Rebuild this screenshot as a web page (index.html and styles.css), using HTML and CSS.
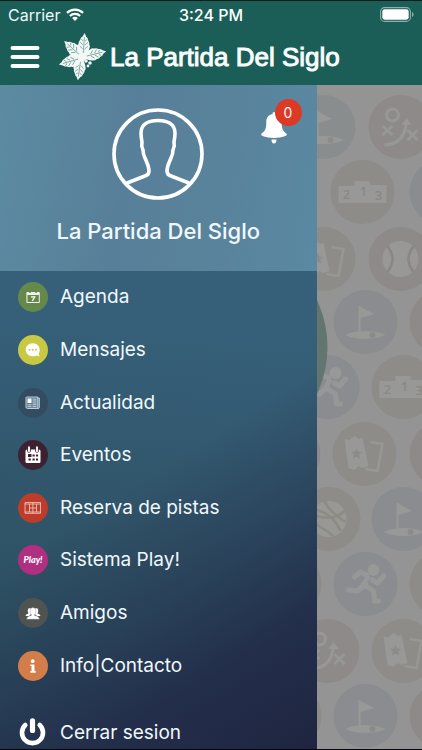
FILE: index.html
```html
<!DOCTYPE html>
<html lang="es">
<head>
<meta charset="utf-8">
<meta name="viewport" content="width=device-width, initial-scale=1">
<title>La Partida Del Siglo</title>
<link rel="stylesheet" href="styles.css">
</head>
<body>
<header class="topbar">
  <div class="status">
    <div class="carrier">
      <span>Carrier</span>
      <svg class="wifi" viewBox="0 0 18 13" aria-hidden="true"><g fill="none" stroke="#fff" stroke-width="2.3"><path d="M1 4.8a11.6 11.6 0 0 1 16 0"/><path d="M3.9 8a7.3 7.3 0 0 1 10.2 0"/></g><path d="M9 13 6.100 10.100a4.200 4.200 0 0 1 5.800 0z" fill="#fff"/></svg>
    </div>
    <time class="clock">3:24 PM</time>
    <svg class="battery" viewBox="0 0 34 15" aria-hidden="true"><rect x=".6" y=".6" width="29.8" height="13.8" rx="4" fill="none" stroke="#8fb0aa" stroke-width="1.1"/><rect x="2.3" y="2.3" width="26.4" height="10.4" rx="2.4" fill="#fff"/><path d="M32 5v5q1.6-.8 1.6-2.5T32 5z" fill="#8fb0aa"/></svg>
  </div>
  <div class="navbar">
    <button class="burger" type="button" aria-label="Menu">
      <svg viewBox="0 0 30 22"><path d="M2.500 2h25M2.500 11h25M2.500 20h25" stroke="#fff" stroke-width="4" stroke-linecap="round"/></svg>
    </button>
    <a class="brand" href="#">
      <svg class="flower" viewBox="0 0 48 48" aria-hidden="true">
        <defs>
          <g id="leaf"><path d="M0 0C-3-2-5-5-5.800-9L-6.200-11-5.400-13-5.200-15-4-17-3.400-19-1.800-20.500 0-24 1.800-20.500 3.400-19 4-17 5.200-15 5.400-13 6.200-11 5.800-9C5-5 3-2 0 0z" fill="#f2f8f6"/><path d="M0-4V-20M-1-8l-3-3M1-8l3-3M-1-12l-3-3M1-12l3-3M-1-16l-2-2M1-16l2-2" stroke="#6f9b93" stroke-width=".8" fill="none"/></g>
        </defs>
        <use href="#leaf" transform="translate(25 24) rotate(4)"/>
        <use href="#leaf" transform="translate(25 24) rotate(76)"/>
        <use href="#leaf" transform="translate(23 25) rotate(188) scale(1 .94)"/>
        <use href="#leaf" transform="translate(24 25) rotate(254)"/>
        <use href="#leaf" transform="translate(24 24) rotate(312)"/>
        <g fill="#f2f8f6"><circle cx="25" cy="25" r="3"/><circle cx="28" cy="28" r="1.800"/><circle cx="32" cy="30" r="1.800"/><circle cx="30" cy="33" r="1.400"/></g>
      </svg>
      <span>La Partida Del Siglo</span>
    </a>
  </div>
</header>

<main class="stage">
  <aside class="drawer">
    <section class="profile">
      <svg class="avatar" viewBox="0 0 92 92" aria-hidden="true"><g fill="none" stroke="#fff" stroke-width="3.600" stroke-linejoin="round"><circle cx="46" cy="46" r="44"/><path d="M15 75 33 68Q37 67 37 63C37 58 35 55 33 50Q31 46 31 42 29 38 30 34 29 29 29 25C29 16 37 12.500 46 12.500S63 16 63 25Q63 29 62 34 63 38 61 42 61 46 59 50C57 55 55 58 55 63Q55 67 59 68L77 75"/></g></svg>
      <h1>La Partida Del Siglo</h1>
      <button class="bell" type="button" aria-label="Notificaciones">
        <svg viewBox="0 0 28 34"><path d="M14 1q1.500 0 1.500 2c4 .8 6.200 3.600 6.200 8 0 7 1 9 5.300 12q.5 3-13 4Q.5 26 1 23c4.300-3 5.300-5 5.300-12 0-4.400 2.200-7.200 6.200-8q0-2 1.500-2zM11.500 28.500h5q0 4-2.500 4t-2.500-4z" fill="#fff"/></svg>
        <span class="badge">0</span>
      </button>
    </section>

    <nav class="menu">
      <ul>
        <li><a href="#"><svg class="icon" viewBox="0 0 30 30"><circle cx="15" cy="15" r="15" fill="#65894a"/><path fill="#edf3e8" fill-rule="evenodd" d="M9 10h2a1 1 0 0 0 2 0h4a1 1 0 0 0 2 0h2q.8 0 .8.800V20q0 1-1 1H9.400q-1 0-1-1v-9.200q0-.8.600-.8zm.5 3v6.900h11.300V13z"/><path d="M12.900 14.800h3.800L14.300 19" fill="none" stroke="#fff" stroke-width="1.300"/></svg><span>Agenda</span></a></li>
        <li><a href="#"><svg class="icon" viewBox="0 0 30 30"><circle cx="15" cy="15" r="15" fill="#c8c843"/><path fill="#fff" d="M14.700 8.300c4 0 7 2.900 7 6.500 0 1.800-.5 3-1.300 4l1.300 2.500-3.400-.9c-1 .6-2.200.9-3.600.9-4 0-7-2.900-7-6.500s3-6.500 7-6.500z"/><g fill="#c8c843"><circle cx="11.500" cy="14.800" r="1"/><circle cx="14.700" cy="14.800" r="1"/><circle cx="17.900" cy="14.800" r="1"/></g></svg><span>Mensajes</span></a></li>
        <li><a href="#"><svg class="icon" viewBox="0 0 30 30"><circle cx="15" cy="15" r="15" fill="#344c61"/><path d="M8.500 9h11.300v11.500H9.500q-1.500 0-1.500-1.500V9.500zM19.800 10h1.500v9.500q0 1-1.500 1" fill="#5e7b90" stroke="#c9dbe8" stroke-width=".9"/><path fill="#fff" d="M9.500 10.500h4V15h-4z"/><path d="M14.500 11.200h4M14.500 13h4M14.500 15h4M9.500 16.800h4M14.500 16.800h4M9.500 18.700h4M14.500 18.700h4" stroke="#dce8f0" stroke-width=".8"/></svg><span>Actualidad</span></a></li>
        <li><a href="#"><svg class="icon" viewBox="0 0 30 30"><circle cx="15" cy="15" r="15" fill="#3e2131"/><rect x="7.500" y="9.500" width="15" height="13.500" rx="1.500" fill="#fff"/><path d="M11 7v4M19 7v4" stroke="#3e2131" stroke-width="3.600" stroke-linecap="round"/><path d="M11 7.300v4M19 7.300v4" stroke="#fff" stroke-width="1.900" stroke-linecap="round"/><path fill="#3e2131" d="M10 14h3.500v3H10zM14.500 14.500h2.200v2h-2.200zM17.900 14.500h2.200v2h-2.200zM10.500 18.500h2.300v2h-2.300zM14.500 18.500h2.200v2h-2.200zM17.900 18.500h2.200v2h-2.200z"/></svg><span>Eventos</span></a></li>
        <li><a href="#"><svg class="icon" viewBox="0 0 30 30"><circle cx="15" cy="15" r="15" fill="#bd3d2a"/><path d="M7 9.500h15.500v10.800H7zM7 11h15.500M7 19h15.500M11.500 11v8M18.500 11v8M14.900 9.500v10.800M11.500 15h7" fill="none" stroke="#f0bdb3" stroke-width=".9"/></svg><span>Reserva de pistas</span></a></li>
        <li><a href="#"><svg class="icon" viewBox="0 0 30 30"><circle cx="15" cy="15" r="15" fill="#b02f80"/><text class="play" x="15" y="17.500" text-anchor="middle">Play!</text></svg><span>Sistema Play!</span></a></li>
        <li><a href="#"><svg class="icon" viewBox="0 0 30 30"><circle cx="15" cy="15" r="15" fill="#4f5450"/><g fill="#fff"><path d="M7.500 18q0-1.800 3-2.500-.9-1.300-.7-3.300c0-2.500 3.700-2.500 3.800 0v3.600L11 18zM22.500 18q0-1.800-3-2.500.9-1.300.7-3.300c0-2.500-3.700-2.500-3.800 0v3.600L19 18z"/><path stroke="#4f5450" stroke-width=".3" d="M8.500 21.200q0-2.800 4.800-3.700v-1q-1.300-1.300-1.100-4.300c0-3.500 5.600-3.500 5.600 0q.2 3-1.100 4.300v1q4.800.9 4.800 3.700z"/></g></svg><span>Amigos</span></a></li>
        <li><a href="#"><svg class="icon" viewBox="0 0 30 30"><circle cx="15" cy="15" r="15" fill="#d57d49"/><g fill="#fff"><circle cx="14.700" cy="10.200" r="1.900"/><path d="M12.300 13.400h4.200v6.600h1.200v1.700h-5.400V20h1.200v-4.900h-1.200z"/></g></svg><span>Info|Contacto</span></a></li>
      </ul>
    </nav>

    <button class="logout" type="button">
      <svg class="icon" viewBox="0 0 30 30"><path d="M7.300 7a10.500 10.500 0 1 0 14.400 0" fill="none" stroke="#fff" stroke-width="4.600" stroke-linecap="round"/><path d="M14.500 2.800v9.700" stroke="#fff" stroke-width="5.200" stroke-linecap="round"/></svg>
      <span>Cerrar sesion</span>
    </button>
  </aside>

  <button class="backdrop" type="button" aria-label="Cerrar menu">
    <svg viewBox="316 85 106 664" preserveAspectRatio="xMaxYMin slice" aria-hidden="true">
      <defs>
        <g id="flag"><path d="M-7-16h2V11h-2zM-5-15 9-8-5-4z"/><path d="M-20 13Q-12 9 0 9t20 4Q12 17 0 17t-20-4z"/><circle class="dim" cx="7" cy="13" r="3"/></g>
        <g id="tactics"><g fill="none" stroke="#989797" stroke-width="3"><circle cx="-8" cy="-12" r="6"/><path d="m-18-1 10 9M-8-1l-10 9M7 3l10 10M17 3 7 13M-16 18Q4 17 6-5"/></g><path d="m6-9 5 7H1z"/></g>
        <g id="podium"><path d="M-24-6h16v-5H7v4h17V11h-48z"/><g class="digits"><text x="-16" y="7">2</text><text x="1" y="4">1</text><text x="16" y="8">3</text></g></g>
        <g id="ticket"><path d="m-20-15 5 1 5-4 5 3 3-1 6 28-6 2-4-2-4 4-6-2z"/><path d="m6-12 12 2-5 27-12-2" fill="none" stroke="#979793" stroke-width="2.500"/><path class="dim" d="m-8-6 1.600 3.500 4 .5-3 2.500 1 4-3.600-2-3.600 2 1-4-3-2.500 4-.5z"/></g>
        <g id="runner"><circle cx="8" cy="-14" r="6"/><path d="M1-9-5-12-11-7M2-6-3 2M7-4l5 3 6-7M0 0l-8 7-9-1M0 2l8 5 1 10h4" fill="none" stroke="#979798" stroke-width="5" stroke-linecap="round" stroke-linejoin="round"/></g>
        <g id="tennis"><circle r="18"/><path d="M-13-13Q-3 0-13 13M13-13Q3 0 13 13" fill="none" stroke="#8c8585" stroke-width="2.500"/></g>
        <g id="basket"><circle r="18"/><path d="M-14-10Q5-5 12 12M-18 2Q-4 10 5 17M-4-18Q0-8 17 3M-16-4Q5 3 16-8" fill="none" stroke="#8d8c83" stroke-width="2.500"/></g>
      </defs>
      <path fill="#949494" d="M316 85h106v664H316z"/>
      <g fill="#8a8d8d"><circle cx="323" cy="127" r="32"/></g>
      <g fill="#8a8c90"><circle cx="441" cy="192" r="32"/><circle cx="365" cy="322" r="32"/><circle cx="403" cy="519" r="32"/><circle cx="365" cy="716" r="32"/><circle cx="327" cy="387" r="32"/><circle cx="365" cy="584" r="32"/></g>
      <g fill="#8f8a8a"><circle cx="400" cy="127" r="32"/><circle cx="400" cy="259" r="32"/><circle cx="441" cy="322" r="32"/><circle cx="441" cy="454" r="32"/><circle cx="327" cy="651" r="32"/><circle cx="441" cy="716" r="32"/><circle cx="288" cy="454" r="32"/></g>
      <g fill="#8e8c88"><circle cx="362" cy="192" r="32"/><circle cx="323" cy="259" r="32"/><circle cx="403" cy="387" r="32"/><circle cx="364" cy="454" r="32"/><circle cx="328" cy="519" r="32"/><circle cx="403" cy="651" r="32"/><circle cx="441" cy="584" r="32"/><circle cx="289" cy="584" r="32"/><circle cx="289" cy="716" r="32"/></g>
      <g fill="#989897">
        <use href="#flag" x="323" y="127"/><use href="#tactics" x="400" y="127"/><use href="#podium" x="362" y="192"/><use href="#ticket" x="325" y="259"/><use href="#tennis" x="400" y="259"/>
        <use href="#flag" x="365" y="322"/><use href="#runner" x="327" y="387"/><use href="#podium" x="403" y="387"/><use href="#ticket" x="364" y="454"/>
        <use href="#basket" x="328" y="519"/><use href="#flag" x="403" y="519"/><use href="#runner" x="365" y="584"/><use href="#tactics" x="327" y="651"/><use href="#ticket" x="403" y="651"/><use href="#flag" x="365" y="716"/>
      </g>
      <circle cx="217" cy="347" r="110" fill="#62756e"/>
    </svg>
  </button>
</main>
</body>
</html>
```
FILE: styles.css
```css
* {
  box-sizing: border-box;
}

body {
  margin: 0;
  min-height: 100vh;
  display: flex;
  flex-direction: column;
  border-top: 1px solid #081c1a;
  border-bottom: 1px solid #05060c;
  background: #949494;
  color: #f1f8fc;
  font-family: Inter, "Liberation Sans", sans-serif;
}

button {
  padding: 0;
  border: 0;
  background: none;
  color: inherit;
  font: inherit;
  cursor: pointer;
}

a {
  color: inherit;
  text-decoration: none;
}

svg {
  display: block;
}

.topbar {
  background: #1a5e57;
}

.status {
  display: grid;
  grid-template-columns: 1fr auto 1fr;
  align-items: center;
  height: 27px;
  padding: 0 8px;
  font-size: 16px;
  line-height: 20px;
}

.carrier {
  display: flex;
  align-items: center;
  gap: 6px;
}

.wifi {
  width: 18px;
  height: 13px;
}

.clock {
  font-weight: 500;
  color: #fff;
}

.battery {
  width: 34px;
  height: 15px;
  justify-self: end;
}

.navbar {
  display: flex;
  align-items: center;
  gap: 18px;
  height: 57px;
  padding: 0 10px;
}

.burger svg {
  width: 30px;
  height: 22px;
}

.brand {
  display: flex;
  align-items: center;
  gap: 4px;
  font-family: "Liberation Sans", sans-serif;
  font-size: 26px;
  line-height: 30px;
  color: #fff;
  -webkit-text-stroke: 1px #f4faf9;
  white-space: nowrap;
}

.flower {
  width: 48px;
  height: 48px;
}

.stage {
  flex: 1;
  display: flex;
}

.drawer {
  width: 75%;
  display: flex;
  flex-direction: column;
  background:
    linear-gradient(148deg, rgba(32, 39, 68, 0) 56%, rgba(36, 48, 78, 0.5) 72%, rgba(34, 43, 72, 0.9) 84%, #1f2541 100%),
    linear-gradient(184deg, #38617b 0%, #36607a 35%, #31566b 62%, #2c4f60 85%, #294759 100%);
}

.profile {
  position: relative;
  display: flex;
  flex-direction: column;
  align-items: center;
  gap: 16px;
  height: 186px;
  padding-top: 23px;
  background: linear-gradient(100deg, #5c8ba2 0%, #587f99 40%, #59829b 65%, #5b89a2 100%);
}

.avatar {
  width: 92px;
  height: 92px;
}

.profile h1 {
  margin: 0;
  font-size: 22px;
  line-height: 30px;
  font-weight: 500;
}

.bell {
  position: absolute;
  top: 26px;
  right: 29px;
}

.bell svg {
  width: 28px;
  height: 34px;
}

.badge {
  position: absolute;
  top: -12px;
  right: -14px;
  width: 27px;
  height: 27px;
  border-radius: 50%;
  background: #dc3a24;
  font-size: 14px;
  line-height: 27px;
  text-align: center;
}

.menu {
  flex: 1;
  display: flex;
}

.menu ul {
  flex: 1;
  display: grid;
  grid-auto-rows: 1fr;
  margin: 0;
  padding: 0;
  list-style: none;
}

.menu a,
.logout {
  display: flex;
  align-items: center;
  gap: 12px;
  height: 100%;
  padding: 0 18px;
  font-size: 19px;
  line-height: 26px;
}

.logout {
  height: 57px;
  padding-top: 24px;
}

.icon {
  flex: none;
  width: 30px;
  height: 30px;
}

.play {
  fill: #fff;
  font-family: Lato, sans-serif;
  font-size: 9px;
  font-style: italic;
  font-weight: 900;
}

.backdrop {
  position: relative;
  flex: 1;
  overflow: hidden;
}

.backdrop svg {
  position: absolute;
  inset: 0;
  width: 100%;
  height: 100%;
}

.dim {
  fill: #8b8b8c;
}

.digits {
  fill: #8a8884;
  font-family: "Open Sans", sans-serif;
  font-size: 13px;
  font-weight: 600;
  text-anchor: middle;
}
```
